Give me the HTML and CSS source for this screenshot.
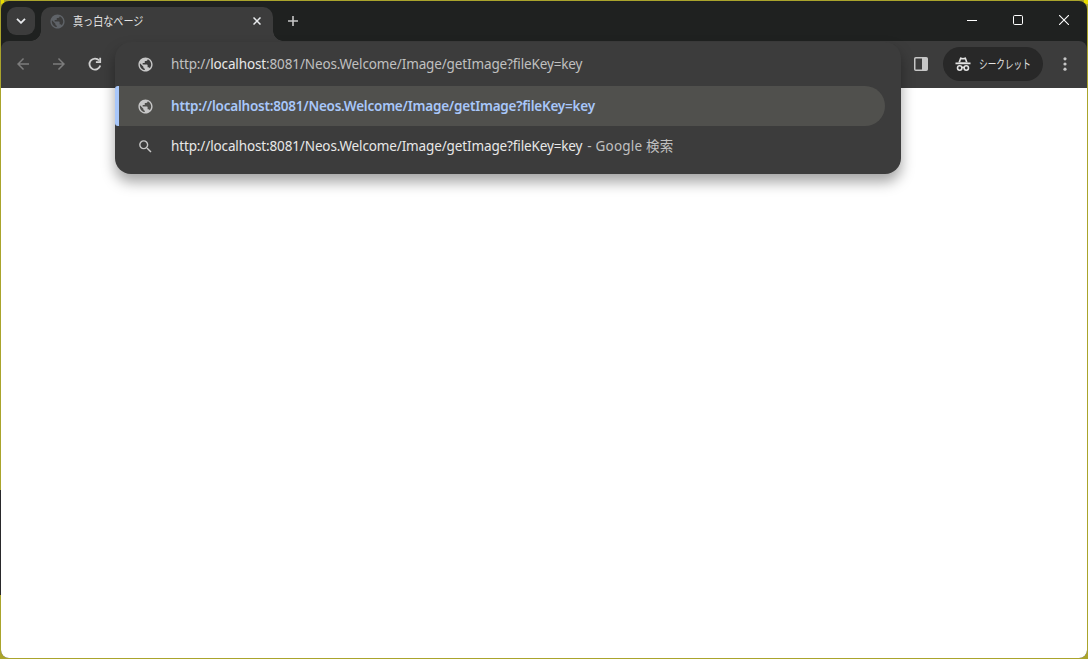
FILE: index.html
```html
<!DOCTYPE html>
<html lang="ja">
<head>
    <meta charset="UTF-8">
    <meta name="viewport" content="width=device-width, initial-scale=1.0">
    <title>真っ白なページ</title>
    <link rel="stylesheet" href="styles.css">
</head>
<body>
    <svg class="defs" width="0" height="0">
        <symbol id="globe" viewBox="0 0 24 24">
            <path d="M12 2C6.480 2 2 6.480 2 12s4.480 10 10 10 10-4.480 10-10S17.520 2 12 2zM4 12c0-.61.08-1.210.21-1.780L8.990 15v1c0 1.100.9 2 2 2v1.930C7.060 19.430 4 16.070 4 12zm13.890 5.400c-.26-.81-1-1.400-1.900-1.400h-1v-3c0-.55-.45-1-1-1h-6v-2h2c.55 0 1-.45 1-1V7h2c1.100 0 2-.9 2-2v-.41C17.920 5.770 20 8.650 20 12c0 2.080-.81 3.980-2.110 5.400z"/>
        </symbol>
    </svg>
    <div class="window">
        <div class="tabstrip">
            <button class="tab-search">
                <svg width="10" height="6" viewBox="0 0 10 6"><path d="M1 .8l4 4 4-4" fill="none" stroke="#e8eaed" stroke-width="1.800"/></svg>
            </button>
            <div class="tab">
                <svg class="favicon" width="17" height="17"><use href="#globe"/></svg>
                <span class="tab-title">真っ白なページ</span>
                <svg class="tab-close" width="8" height="8" viewBox="0 0 8 8"><path d="M.5.5l7 7M7.500.5l-7 7" stroke="#e8eaed" stroke-width="1.500"/></svg>
            </div>
            <svg class="new-tab" width="10" height="10" viewBox="0 0 10 10"><path d="M5 0v10M0 5h10" stroke="#c7c7c7" stroke-width="1.600"/></svg>
            <div class="controls">
                <span><svg width="10" height="10" viewBox="0 0 10 10"><path d="M0 5.500h10" stroke="#fff"/></svg></span>
                <span><svg width="10" height="10" viewBox="0 0 10 10"><rect x=".5" y=".5" width="9" height="9" rx="1.200" fill="none" stroke="#fff"/></svg></span>
                <span><svg width="10" height="10" viewBox="0 0 10 10"><path d="M0 0l10 10M10 0L0 10" stroke="#fff" stroke-width="1.100"/></svg></span>
            </div>
        </div>
        <div class="toolbar">
            <div class="nav">
                <svg width="18" height="18" viewBox="0 0 24 24" fill="#7c7c7c"><path d="M20 11H7.830l5.590-5.590L12 4l-8 8 8 8 1.410-1.410L7.830 13H20v-2z"/></svg>
                <svg width="18" height="18" viewBox="0 0 24 24" fill="#7c7c7c"><path d="M12 4l-1.410 1.410L16.170 11H4v2h12.170l-5.580 5.590L12 20l8-8z"/></svg>
                <svg width="18" height="18" viewBox="0 0 18 18" fill="none" stroke="#d0d0d0" stroke-width="1.800"><path d="M14.300 10.500A5.500 5.500 0 1 1 13.200 5.500"/><path d="M14.200 2.800v4.300H9.900"/></svg>
            </div>
            <div class="actions">
                <svg class="side-panel" width="14" height="14" viewBox="0 0 14 14"><rect x=".75" y=".75" width="12.500" height="12.500" rx="1" fill="none" stroke="#c7c7c7" stroke-width="1.500"/><path d="M8 1h5v12H8z" fill="#c7c7c7"/></svg>
                <div class="incognito">
                    <svg width="16" height="16" viewBox="0 0 16 16">
                        <path d="M3.300 6.500L5.200 1.200l2.800.7 2.800-.7 1.900 5.300z" fill="#e3e3e3"/>
                        <path d="M6 3.500h4L10.700 6H5.300z" fill="#282828"/>
                        <path d="M.5 7.300h15" stroke="#e3e3e3" stroke-width="1.800"/>
                        <g fill="none" stroke="#e3e3e3" stroke-width="1.600"><circle cx="4.700" cy="12" r="2.200"/><circle cx="11.300" cy="12" r="2.200"/><path d="M6.800 11.600q1.200-.7 2.400 0"/></g>
                    </svg>
                    <span class="incognito-label">シークレット</span>
                </div>
                <svg class="menu" width="4" height="16" viewBox="0 0 4 16" fill="#c7c7c7"><circle cx="2" cy="2.800" r="1.600"/><circle cx="2" cy="8" r="1.600"/><circle cx="2" cy="13.200" r="1.600"/></svg>
            </div>
        </div>
        <div class="page">
            <div class="omnibox">
                <div class="row url">
                    <svg width="17" height="17"><use href="#globe"/></svg>
                    <span class="text">http://<b>localhost</b>:8081/Neos.Welcome/Image/getImage?fileKey=key</span>
                </div>
                <div class="row selected">
                    <svg width="17" height="17"><use href="#globe"/></svg>
                    <span class="text">http://localhost:8081/Neos.Welcome/Image/getImage?fileKey=key</span>
                </div>
                <div class="row">
                    <svg width="17" height="17" viewBox="0 0 24 24"><path d="M15.500 14h-.79l-.28-.27A6.471 6.471 0 0 0 16 9.500 6.500 6.500 0 1 0 9.500 16c1.610 0 3.090-.59 4.230-1.570l.27.28v.79l5 4.990L20.490 19l-4.990-5zm-6 0C7.010 14 5 11.990 5 9.500S7.010 5 9.500 5 14 7.010 14 9.500 11.990 14 9.500 14z"/></svg>
                    <span class="text">http://localhost:8081/Neos.Welcome/Image/getImage?fileKey=key</span>
                    <span class="hint">- Google 検索</span>
                </div>
            </div>
        </div>
    </div>
</body>
</html>
```
FILE: styles.css
```css
* {
    box-sizing: border-box;
}
body {
    margin: 0;
    height: 100vh;
    padding: 1px;
    overflow: hidden;
    font-family: "Noto Sans", "Noto Sans CJK JP", sans-serif;
    background:
        linear-gradient(#aaa42c 490px, #29292b 490px, #29292b 595px, #aaa42c 595px) 0 0 / 1px 100% no-repeat,
        linear-gradient(#e8dc00, #e8dc00) 0 0 / 4px 4px no-repeat,
        linear-gradient(#e8dc00, #e8dc00) 100% 0 / 4px 4px no-repeat,
        #aaa42c;
}
svg {
    display: block;
    flex: none;
}
.defs {
    position: absolute;
}
.window {
    height: 100%;
    display: flex;
    flex-direction: column;
    border-radius: 8px;
    overflow: hidden;
    background: #1f2120;
}
.tabstrip {
    display: flex;
    height: 40px;
    flex: none;
    padding-left: 6px;
}
.tab-search {
    display: flex;
    align-items: center;
    justify-content: center;
    width: 28px;
    height: 28px;
    margin: 6px 6px 0 0;
    padding: 0;
    border: 0;
    border-radius: 9px;
    background: #3c3c3c;
}
.tab {
    position: relative;
    display: flex;
    align-items: center;
    width: 232px;
    height: 34px;
    margin-top: 6px;
    padding: 0 12px 6px 8px;
    border-radius: 10px 10px 0 0;
    background: #3c3c3c;
}
.tab::before, .tab::after {
    content: "";
    position: absolute;
    bottom: 0;
    width: 10px;
    height: 10px;
}
.tab::before {
    right: 100%;
    background: radial-gradient(circle at 0 0, transparent 9.5px, #3c3c3c 10px);
}
.tab::after {
    left: 100%;
    background: radial-gradient(circle at 100% 0, transparent 9.5px, #3c3c3c 10px);
}
.favicon {
    fill: #5f6368;
}
.tab-title {
    flex: 1;
    margin-left: 7px;
    padding-top: 2px;
    font-size: 12px;
    line-height: 16px;
    color: #e3e3e3;
    transform: scaleX(.84);
    transform-origin: 0 50%;
}
.new-tab {
    margin: 15px 0 0 15px;
}
.controls {
    display: flex;
    margin-left: auto;
}
.controls span {
    display: flex;
    justify-content: center;
    width: 46px;
    padding-top: 14px;
}
.toolbar {
    display: flex;
    justify-content: space-between;
    align-items: center;
    height: 47px;
    flex: none;
    padding: 0 20px 1px 13px;
    border-radius: 8px 8px 0 0;
    background: #3c3c3c;
}
.nav {
    display: flex;
    gap: 18px;
}
.actions {
    display: flex;
    align-items: center;
}
.incognito {
    display: flex;
    align-items: center;
    gap: 8px;
    width: 100px;
    height: 34px;
    margin: 0 20px 0 15px;
    padding-left: 12px;
    border-radius: 17px;
    background: #282828;
    color: #e3e3e3;
    font-size: 12px;
    white-space: nowrap;
}
.incognito-label {
    transform: scaleX(.72);
    transform-origin: 0 50%;
}
.page {
    flex: 1;
    background: #fff;
}
.omnibox {
    position: absolute;
    left: 115px;
    top: 42px;
    width: 786px;
    height: 132px;
    border-radius: 16px;
    background: #3c3c3c;
    box-shadow: 0 8px 14px rgba(0, 0, 0, .36);
}
.row {
    display: flex;
    align-items: center;
    height: 40px;
    padding-left: 21.5px;
    font-size: 13.5px;
    letter-spacing: -.13px;
    white-space: pre;
    color: #e8e8e8;
    fill: #c7c7c7;
}
.row svg {
    margin-right: 17.5px;
}
.url {
    height: 44px;
    color: #c0c0c0;
}
.url b {
    font-weight: 400;
    color: #e8e8e8;
}
.selected {
    width: 770px;
    padding-left: 17.5px;
    border-left: 4px solid #a8c7fa;
    border-radius: 3px 20px 20px 3px;
    background: #50504d;
    color: #a8c7fa;
    font-weight: 600;
    letter-spacing: -.22px;
}
.hint {
    margin: 0 0 2px 5px;
    letter-spacing: .2px;
    color: #c0c0c0;
}
```
